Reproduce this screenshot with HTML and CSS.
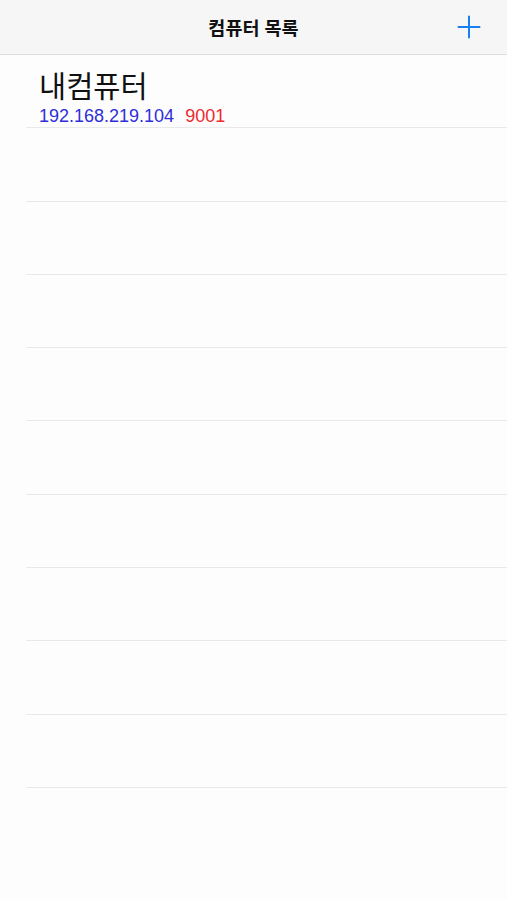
FILE: index.html
```html
<!DOCTYPE html>
<html lang="ko">
<head>
<meta charset="utf-8">
<link rel="stylesheet" href="styles.css">
</head>
<body>
<div class="app">
  <header class="navbar">
    <div class="nav-title">컴퓨터 목록</div>
    <button class="nav-add" aria-label="추가">
      <svg width="24" height="24" viewBox="0 0 24 24"><path d="M12 1.5V22.5M1.5 12H22.5" stroke="#1a7ff0" stroke-width="2" stroke-linecap="round" fill="none"/></svg>
    </button>
  </header>
  <ul class="list">
    <li class="row">
      <div class="row-name">내컴퓨터</div>
      <div class="row-addr"><span class="ip">192.168.219.104</span><span class="port">9001</span></div>
    </li>
    <li class="row"></li>
    <li class="row"></li>
    <li class="row"></li>
    <li class="row"></li>
    <li class="row"></li>
    <li class="row"></li>
    <li class="row"></li>
    <li class="row"></li>
    <li class="row"></li>
  </ul>
</div>
</body>
</html>
```
FILE: styles.css
```css
html, body {
  margin: 0;
  padding: 0;
  background: #fdfdfd;
}
body {
  font-family: "Liberation Sans", "Noto Sans CJK KR", sans-serif;
  color: #111;
}
.app {
  width: 507px;
}
.navbar {
  height: 54px;
  background: #f7f6f7;
  border-bottom: 1px solid #dedede;
  display: flex;
  align-items: center;
  justify-content: center;
  position: relative;
}
.nav-title {
  font-family: "Noto Sans CJK KR", sans-serif;
  font-weight: 700;
  font-size: 18.5px;
  color: #111;
}
.nav-add {
  position: absolute;
  right: 26px;
  top: 15px;
  padding: 0;
  border: 0;
  background: none;
  width: 24px;
  height: 24px;
  display: flex;
}
.list {
  list-style: none;
  margin: 0;
  padding: 0 0 0 26px;
}
.row {
  box-sizing: border-box;
  height: 73.3px;
  border-bottom: 1px solid #e9e9e9;
  padding: 10px 0 0 13px;
}
.row-name {
  font-family: "Noto Sans CJK KR", sans-serif;
  font-size: 29.5px;
  line-height: 38px;
  color: #111;
}
.row-addr {
  display: flex;
  gap: 11px;
  font-size: 18px;
  line-height: 20px;
  margin-top: 3px;
}
.ip {
  color: #2e2ed9;
}
.port {
  color: #ee2a2e;
}
```
